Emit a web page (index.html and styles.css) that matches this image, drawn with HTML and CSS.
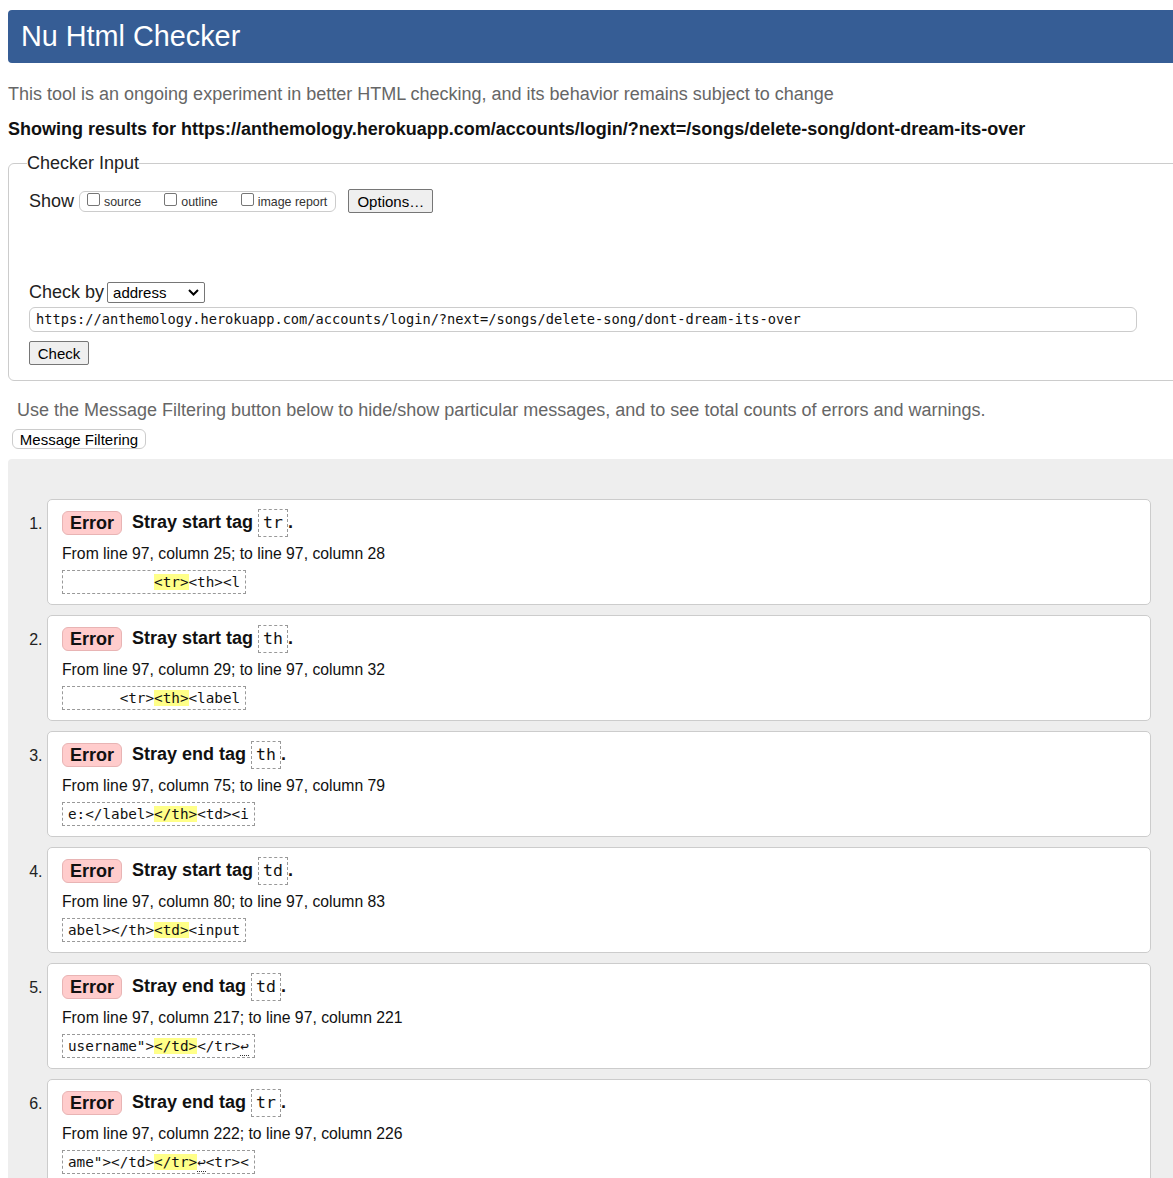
FILE: index.html
```html
<!DOCTYPE html>
<html>
<head>
<meta charset="utf-8">
<title>Nu Html Checker</title>
<link rel="stylesheet" href="styles.css">
</head>
<body>
<div class="page">
  <h1 class="header">Nu Html Checker</h1>
  <p class="intro">This tool is an ongoing experiment in better HTML checking, and its behavior remains subject to change</p>
  <p class="results">Showing results for https://anthemology.herokuapp.com/accounts/login/?next=/songs/delete-song/dont-dream-its-over</p>

  <fieldset class="checker">
    <legend>Checker Input</legend>
    <div class="show-row">
      <span class="show-label">Show</span>
      <span class="cbgroup">
        <label class="cb"><span class="box"></span>source</label>
        <label class="cb"><span class="box"></span>outline</label>
        <label class="cb"><span class="box"></span>image report</label>
      </span>
      <span class="btn options">Options…</span>
    </div>
    <div class="checkby-row">
      <span class="checkby-label">Check by</span>
      <span class="select">address
        <svg class="chev" width="11" height="7" viewBox="0 0 11 7"><path d="M1 1 L5.5 5.5 L10 1" fill="none" stroke="#000" stroke-width="2"/></svg>
      </span>
    </div>
    <div class="url">https://anthemology.herokuapp.com/accounts/login/?next=/songs/delete-song/dont-dream-its-over</div>
    <span class="btn check">Check</span>
  </fieldset>

  <p class="filter-note">Use the Message Filtering button below to hide/show particular messages, and to see total counts of errors and warnings.</p>
  <span class="btn filter">Message Filtering</span>

  <div class="results-area">
    <ol class="messages">
      <li class="msg">
        <p class="title"><span class="badge">Error</span> <span class="text">Stray start tag <code>tr</code>.</span></p>
        <p class="loc">From line 97, column 25; to line 97, column 28</p>
        <p class="extract"><code>          <mark>&lt;tr&gt;</mark>&lt;th&gt;&lt;l</code></p>
      </li>
      <li class="msg">
        <p class="title"><span class="badge">Error</span> <span class="text">Stray start tag <code>th</code>.</span></p>
        <p class="loc">From line 97, column 29; to line 97, column 32</p>
        <p class="extract"><code>      &lt;tr&gt;<mark>&lt;th&gt;</mark>&lt;label</code></p>
      </li>
      <li class="msg">
        <p class="title"><span class="badge">Error</span> <span class="text">Stray end tag <code>th</code>.</span></p>
        <p class="loc">From line 97, column 75; to line 97, column 79</p>
        <p class="extract"><code>e:&lt;/label&gt;<mark>&lt;/th&gt;</mark>&lt;td&gt;&lt;i</code></p>
      </li>
      <li class="msg">
        <p class="title"><span class="badge">Error</span> <span class="text">Stray start tag <code>td</code>.</span></p>
        <p class="loc">From line 97, column 80; to line 97, column 83</p>
        <p class="extract"><code>abel&gt;&lt;/th&gt;<mark>&lt;td&gt;</mark>&lt;input</code></p>
      </li>
      <li class="msg">
        <p class="title"><span class="badge">Error</span> <span class="text">Stray end tag <code>td</code>.</span></p>
        <p class="loc">From line 97, column 217; to line 97, column 221</p>
        <p class="extract"><code>username"&gt;<mark>&lt;/td&gt;</mark>&lt;/tr&gt;<span class="lf">↩</span></code></p>
      </li>
      <li class="msg">
        <p class="title"><span class="badge">Error</span> <span class="text">Stray end tag <code>tr</code>.</span></p>
        <p class="loc">From line 97, column 222; to line 97, column 226</p>
        <p class="extract"><code>ame"&gt;&lt;/td&gt;<mark>&lt;/tr&gt;</mark><span class="lf">↩</span>&lt;tr&gt;&lt;</code></p>
      </li>
    </ol>
  </div>
</div>
</body>
</html>
```

FILE: styles.css
```css
html, body {
  margin: 0;
  padding: 0;
  overflow: hidden;
  background: #fff;
}
body {
  font-family: "Liberation Sans", Arial, sans-serif;
  font-size: 18px;
  color: #000;
}
.page {
  padding: 10px 0 0 8px;
}
.header {
  margin: 0 -12px 0 0;
  height: 53px;
  box-sizing: border-box;
  padding: 9px 0 0 13px;
  background: #365d95;
  color: #fff;
  font-size: 28.8px;
  font-weight: normal;
  line-height: 34px;
  border-radius: 4px;
}
.intro {
  margin: 20px 0 0 0;
  color: #666;
  font-size: 18px;
  line-height: 22px;
}
.results {
  margin: 13px 0 0 0;
  font-weight: bold;
  font-size: 18px;
  line-height: 22px;
  color: #111;
}
.checker {
  margin: 12px -20px 0 0;
  border: 1px solid #ccc;
  border-radius: 6px;
  padding: 6px 20px 15px 20px;
}
.checker legend {
  padding: 0;
  margin-left: -2px;
  font-size: 18px;
  line-height: 22px;
  color: #222;
}
.show-row {
  display: flex;
  align-items: center;
  height: 24px;
  margin-top: 9px;
}
.show-label {
  font-size: 18px;
  margin-right: 5px;
  color: #222;
}
.cbgroup {
  display: flex;
  align-items: center;
  height: 19px;
  border: 1px solid #ccc;
  border-radius: 6px;
  padding: 0 8px 0 7px;
  margin-right: 12px;
}
.cb {
  display: flex;
  align-items: center;
  font-size: 12.4px;
  color: #333;
  margin-right: 23px;
  line-height: 14px;
  padding-top: 2px;
}
.cb:last-child { margin-right: 0; }
.box {
  display: inline-block;
  width: 11px;
  height: 11px;
  border: 1px solid #767676;
  border-radius: 2px;
  margin: -6px 4px 0 0;
  background: #fff;
}
.btn {
  display: inline-flex;
  align-items: center;
  justify-content: center;
  box-sizing: border-box;
  font-size: 15px;
  color: #000;
  background: #efefef;
  border: 1px solid #767676;
  border-radius: 2px;
}
.options {
  width: 85px;
  height: 24px;
  padding-top: 1px;
}
.checkby-row {
  display: flex;
  align-items: center;
  margin-top: 68px;
  height: 22px;
}
.checkby-label {
  font-size: 18px;
  color: #222;
  margin-right: 3px;
}
.select {
  display: inline-flex;
  align-items: center;
  justify-content: space-between;
  box-sizing: border-box;
  width: 98px;
  height: 21px;
  border: 1px solid #767676;
  border-radius: 2px;
  padding: 0 5px 0 5px;
  font-size: 15px;
  background: #fff;
}
.url {
  margin-top: 4px;
  box-sizing: border-box;
  width: 1108px;
  height: 25px;
  border: 1px solid #ccc;
  border-radius: 6px;
  padding: 0 6px;
  font-family: "DejaVu Sans Mono", "Liberation Mono", monospace;
  font-size: 13.67px;
  line-height: 23px;
  color: #111;
  white-space: nowrap;
}
.check {
  margin-top: 9px;
  width: 60px;
  height: 24px;
}
.filter-note {
  margin: 18px 0 0 9px;
  color: #666;
  font-size: 18px;
  line-height: 22px;
}
.filter {
  margin: 8px 0 0 4px;
  height: 20px;
  width: 134px;
  background: #fff;
  border: 1px solid #ccc;
  border-radius: 6px;
  font-size: 15px;
}
.results-area {
  margin-top: 9px;
  background: #eee;
  border-radius: 4px 0 0 0;
  padding: 40px 22px 30px 0;
}
.messages {
  margin: 0;
  padding: 0 0 0 39px;
  font-size: 16px;
}
.msg {
  background: #fff;
  border: 1px solid #ccc;
  border-radius: 5px;
  padding: 9px 14px 10px 14px;
  margin-bottom: 10px;
  height: 106px;
  box-sizing: border-box;
  color: #111;
}
.msg::marker {
  color: #222;
  font-size: 16px;
}
.title {
  margin: 0;
  display: flex;
  align-items: center;
  height: 28px;
}
.badge {
  display: inline-block;
  background: #fcc;
  border: 1px solid #e8b4b4;
  border-radius: 6px;
  font-weight: bold;
  font-size: 18px;
  line-height: 22px;
  padding: 0 7px;
  margin-right: 10px;
}
.text {
  font-weight: bold;
  font-size: 18px;
}
.text code {
  display: inline-block;
  font-family: "DejaVu Sans Mono", "Liberation Mono", monospace;
  font-weight: normal;
  font-size: 16.5px;
  border: 1px dashed #999;
  padding: 0 4px;
  line-height: 26px;
  vertical-align: middle;
}
.loc {
  margin: 6px 0 0 0;
  line-height: 22px;
  font-size: 15.75px;
}
.extract {
  margin: 5px 0 0 0;
}
.extract code {
  display: inline-block;
  white-space: pre;
  font-family: "DejaVu Sans Mono", "Liberation Mono", monospace;
  font-size: 14.3px;
  line-height: 22px;
  border: 1px dashed #999;
  padding: 0 5px;
  color: #111;
}
mark {
  background: #ff8;
  color: #111;
}
.lf {
  border-bottom: 1px dotted #333;
  line-height: 17px;
  display: inline-block;
}
```
